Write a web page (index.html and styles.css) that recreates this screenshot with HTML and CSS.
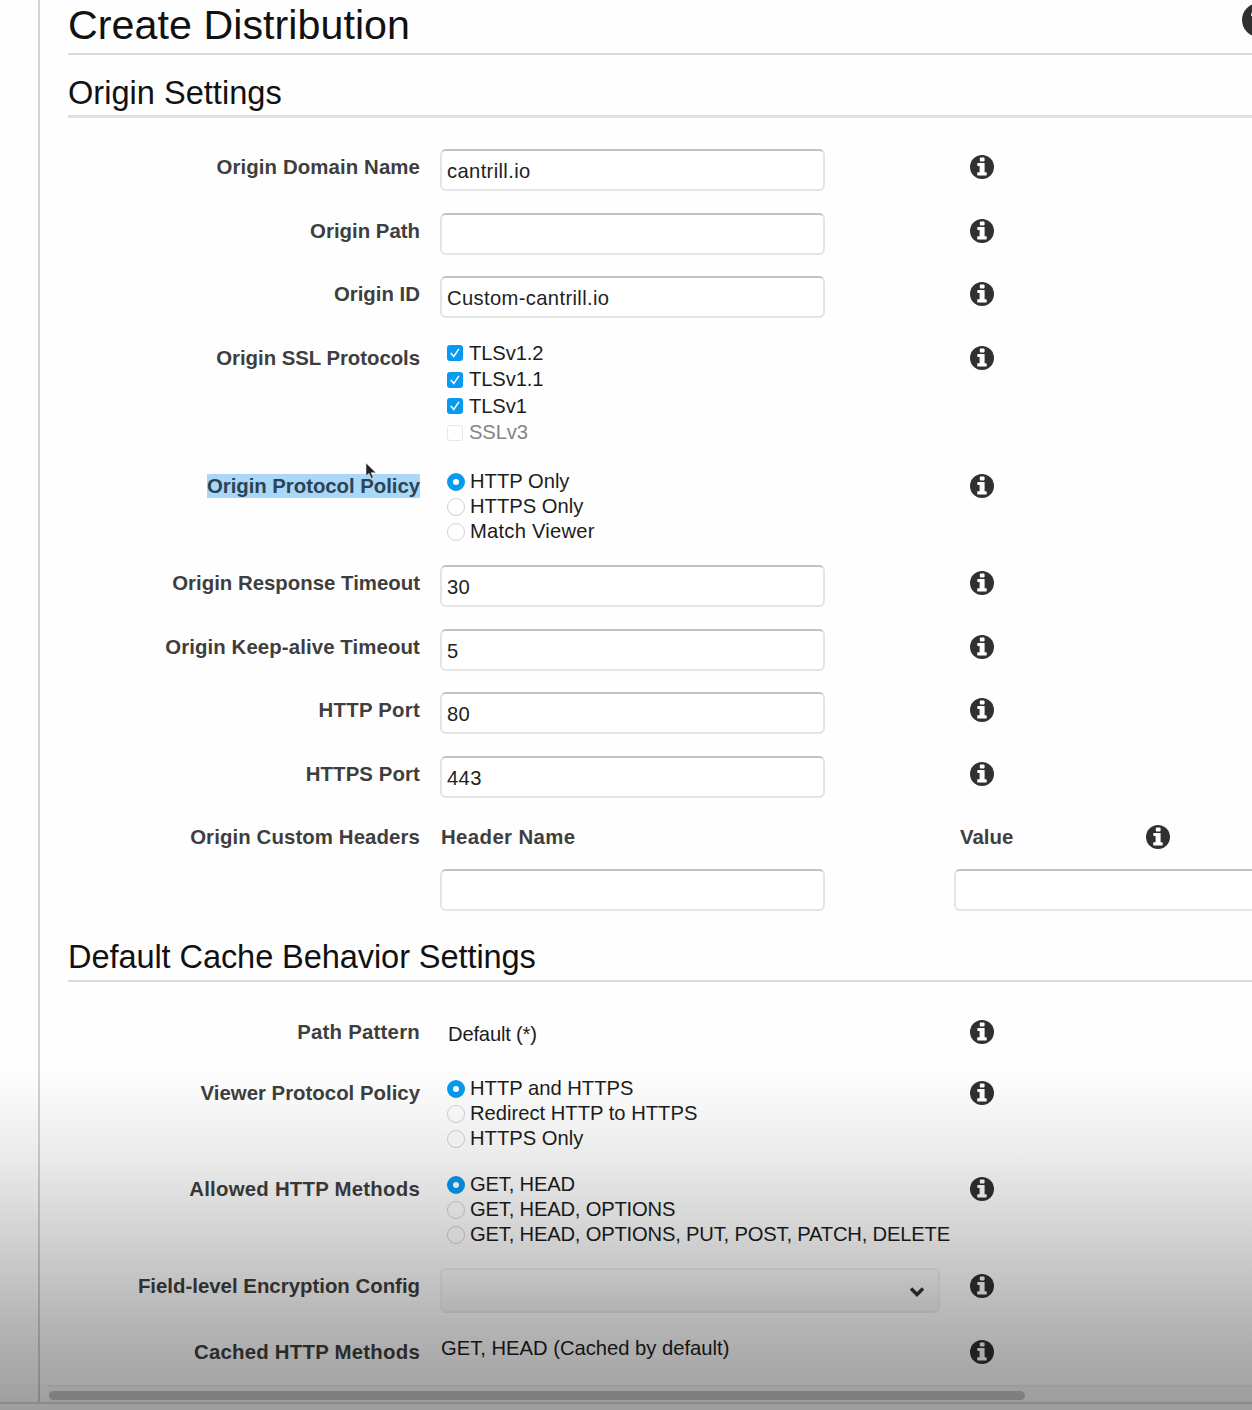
FILE: index.html
```html
<!DOCTYPE html>
<html lang="en">
<head>
<meta charset="utf-8">
<title>Create Distribution</title>
<link rel="stylesheet" href="styles.css">
</head>
<body>
<svg class="sprite" aria-hidden="true">
  <symbol id="info" viewBox="0 0 24 24">
    <circle cx="12" cy="12" r="12" fill="#303030"/>
    <path fill="#fff" d="M10.4 2.4h3.6l.6.8v2.6l-.6.7h-3.6l-.6-.7V3.200zM7.800 8.100h6.8v9.200h1.700l.4.5v2.200l-.4.5H7.600l-.4-.5v-2.200l.4-.5h2v-6.300H7.800l-.5-.5V8.600z"/>
  </symbol>
  <symbol id="check" viewBox="0 0 16 16">
    <path d="M4.2 8.4l2.6 3 4.8-7" fill="none" stroke="#fff" stroke-width="1.5" stroke-linecap="round"/>
  </symbol>
</svg>
<div class="window">
  <div class="panes">
    <aside class="side"></aside>
    <main class="content">
      <header class="title-bar">
        <h1>Create Distribution</h1>
        <svg class="help" viewBox="0 0 34 34"><circle cx="17" cy="17" r="17" fill="#303030"/><path d="M11 13c0-8 12-8 12-1 0 5-6 4-6 9m0 3v4" fill="none" stroke="#fff" stroke-width="4"/></svg>
      </header>
      <h2 class="origin-title">Origin Settings</h2>
      <section class="origin">
        <div class="row h64"><label class="wide">Origin Domain Name</label><div class="field"><input type="text" value="cantrill.io"></div><svg class="info"><use href="#info"/></svg></div>
        <div class="row h63"><label>Origin Path</label><div class="field"><input type="text"></div><svg class="info"><use href="#info"/></svg></div>
        <div class="row h64"><label>Origin ID</label><div class="field"><input type="text" value="Custom-cantrill.io"></div><svg class="info"><use href="#info"/></svg></div>
        <div class="row h128"><label class="tight">Origin SSL Protocols</label>
          <div class="field checks">
            <div class="opt"><span class="box on"><svg><use href="#check"/></svg></span><span>TLSv1.2</span></div>
            <div class="opt"><span class="box on"><svg><use href="#check"/></svg></span><span>TLSv1.1</span></div>
            <div class="opt"><span class="box on"><svg><use href="#check"/></svg></span><span>TLSv1</span></div>
            <div class="opt off"><span class="box"></span><span>SSLv3</span></div>
          </div><svg class="info"><use href="#info"/></svg></div>
        <div class="row h97"><label class="tight"><mark>Origin Protocol Policy</mark></label>
          <div class="field radios">
            <div class="opt"><span class="radio on"></span><span>HTTP Only</span></div>
            <div class="opt"><span class="radio"></span><span>HTTPS Only</span></div>
            <div class="opt"><span class="radio"></span><span class="wider">Match Viewer</span></div>
          </div><svg class="info"><use href="#info"/></svg></div>
        <div class="row h64"><label>Origin Response Timeout</label><div class="field"><input type="text" value="30"></div><svg class="info"><use href="#info"/></svg></div>
        <div class="row h63"><label class="wide">Origin Keep-alive Timeout</label><div class="field"><input type="text" value="5"></div><svg class="info"><use href="#info"/></svg></div>
        <div class="row h64"><label class="wider">HTTP Port</label><div class="field"><input type="text" value="80"></div><svg class="info"><use href="#info"/></svg></div>
        <div class="row h63"><label class="wide">HTTPS Port</label><div class="field"><input type="text" value="443"></div><svg class="info"><use href="#info"/></svg></div>
        <div class="row headers"><label class="wide">Origin Custom Headers</label>
          <div class="header-name"><b class="widest">Header Name</b><input type="text"></div>
          <div class="header-value"><div class="value-top"><b>Value</b><svg class="info"><use href="#info"/></svg></div><input type="text"></div>
        </div>
      </section>
      <h2 class="cache-title">Default Cache Behavior Settings</h2>
      <section class="cache">
        <div class="row h61"><label class="wider">Path Pattern</label><div class="field pattern tighter">Default (*)</div><svg class="info"><use href="#info"/></svg></div>
        <div class="row h96"><label>Viewer Protocol Policy</label>
          <div class="field radios">
            <div class="opt"><span class="radio on"></span><span>HTTP and HTTPS</span></div>
            <div class="opt"><span class="radio"></span><span>Redirect HTTP to HTTPS</span></div>
            <div class="opt"><span class="radio"></span><span>HTTPS Only</span></div>
          </div><svg class="info"><use href="#info"/></svg></div>
        <div class="row h97"><label class="wider">Allowed HTTP Methods</label>
          <div class="field radios tighter">
            <div class="opt"><span class="radio on"></span><span>GET, HEAD</span></div>
            <div class="opt"><span class="radio"></span><span>GET, HEAD, OPTIONS</span></div>
            <div class="opt"><span class="radio"></span><span>GET, HEAD, OPTIONS, PUT, POST, PATCH, DELETE</span></div>
          </div><svg class="info"><use href="#info"/></svg></div>
        <div class="row h66"><label>Field-level Encryption Config</label>
          <div class="field"><div class="select"><svg viewBox="0 0 16 12"><path d="M2 2.500l6 6 6-6" fill="none" stroke="#333" stroke-width="3.4"/></svg></div></div><svg class="info"><use href="#info"/></svg></div>
        <div class="row last"><label class="wider">Cached HTTP Methods</label><div class="field cached">GET, HEAD (Cached by default)</div><svg class="info"><use href="#info"/></svg></div>
      </section>
      <div class="scrollbar"><div class="thumb"></div></div>
    </main>
  </div>
  <div class="shade"></div>
  <svg class="cursor" viewBox="0 0 12 18"><path d="M1 1v13l3-2.600 2.300 5 2-1-2.200-4.600H11z" fill="#222" stroke="#ddd" stroke-width=".7"/></svg>
</div>
</body>
</html>
```

FILE: styles.css
```css
* { box-sizing: border-box; }
body {
  margin: 0;
  font-family: "Liberation Sans", Arial, sans-serif;
  font-size: 20.2px;
  color: #1c1c1c;
  background: #fefefe;
}
.sprite { display: block; width: 0; height: 0; }
.window { position: relative; width: 1252px; height: 1410px; overflow: hidden; }
.panes { display: flex; height: 1404px; border-bottom: 2px solid #dcdcdc; }
.side { flex: 0 0 40px; border-right: 2px solid #d3d3d3; }
.content { flex: 0 0 1212px; display: flex; flex-direction: column; overflow: hidden; }

.title-bar {
  display: flex;
  justify-content: space-between;
  height: 55px;
  margin: 0 -24px 0 28px;
  border-bottom: 2px solid #dadada;
}
h1, h2 { margin: 0; font-weight: 400; color: #111; white-space: nowrap; }
h1 { font-size: 41.2px; line-height: 50px; letter-spacing: .05px; }
.help { flex: none; width: 34px; height: 34px; margin: 3px 0 0; }
h2 { margin-left: 28px; font-size: 32.6px; border-bottom: 2px solid #dadada; }
.origin-title { height: 63px; line-height: 75px; border-bottom: 3px solid #e0e0e0; }
.origin { padding-top: 29px; }
.cache-title { height: 54px; line-height: 58px; letter-spacing: -.1px; }
.cache { padding-top: 30px; }

.tight { letter-spacing: -.05px; }
.tighter { letter-spacing: -.19px; }
.wide { letter-spacing: .1px; }
.wider { letter-spacing: .23px; }
.widest { letter-spacing: .38px; }

.row { display: grid; grid-template-columns: 380px 510px 24px; column-gap: 20px; align-items: start; }
.h61 { height: 61px; }
.h63 { height: 63px; }
.h64 { height: 64px; }
.h66 { height: 66px; }
.h96 { height: 96px; }
.h97 { height: 97px; }
.h128 { height: 128px; }
.headers { height: 111px; grid-template-columns: 380px 384px 320px; }
.header-value { margin-left: 105px; }
.last { height: 53px; }
label, b { font-weight: 700; font-size: 20.4px; line-height: 24px; color: #3e3e3e; white-space: nowrap; }
label { padding-top: 8px; text-align: right; }
mark { background: #a9d7f7; color: #2c4356; padding: 1px 0; }
.info { display: block; width: 24px; height: 24px; margin-top: 8px; }

input {
  display: block;
  width: 385px;
  height: 42px;
  margin: 2px 0 0;
  padding: 2px 6px 0 5px;
  border: 2px solid #e4e4e4;
  border-top-color: #c2c2c2;
  border-radius: 6px;
  background: #fff;
  font: inherit;
  letter-spacing: .36px;
  color: #222;
}
.header-name, .header-value { padding-top: 8px; }
.header-name b { display: block; padding-left: 1px; }
.header-name input { margin-top: 20px; }
.header-value input { width: 340px; margin: 20px 0 0 5px; }
.value-top { display: flex; justify-content: space-between; width: 221px; height: 24px; padding-left: 11px; }
.value-top .info { margin-top: 0; }

.opt { display: flex; align-items: center; white-space: nowrap; }
.checks { padding: 2px 0 0 7px; letter-spacing: -.1px; }
.checks .opt { height: 26.5px; gap: 6px; }
.box { flex: none; width: 16px; height: 16px; border: 1px solid #e6e6e6; border-radius: 3px; background: #fff; }
.box.on { border: 0; background: #069af0; }
.box svg { display: block; width: 16px; height: 16px; }
.off { color: #858585; }
.radios { padding: 3px 0 0 7px; }
.radios .opt { height: 25px; gap: 5px; }
.radio { flex: none; width: 18px; height: 18px; border: 1px solid #d2d2d2; border-radius: 50%; }
.radio.on { border: 6px solid #069af0; background: #fff; }
.pattern { padding: 10px 0 0 8px; line-height: 24px; }
.cached { padding: 4px 0 0 1px; line-height: 24px; }
.select {
  display: flex;
  align-items: center;
  justify-content: flex-end;
  width: 500px;
  height: 45px;
  margin-top: 2px;
  padding: 3px 13px 0 0;
  border: 2px solid #f0f0f0;
  border-bottom-color: #e9e9e9;
  border-radius: 6px;
  background: linear-gradient(#fcfcfc, #f4f4f4);
}
.select svg { width: 16px; height: 12px; }

.scrollbar { height: 17px; margin-left: 8px; border-top: 2px solid #f1f1f1; background: #fafafa; padding-top: 4px; }
.thumb { width: 976px; height: 9px; margin-left: 1px; border-radius: 5px; background: #c8c8c8; }

/* bottom fade laid over the whole window */
.shade {
  position: absolute;
  inset: 1070px 0 0;
  background: linear-gradient(rgba(0,0,0,0) 0%, rgba(0,0,0,.075) 25%, rgba(0,0,0,.18) 50%, rgba(0,0,0,.29) 75%, rgba(0,0,0,.38) 100%);
}
.cursor { position: absolute; left: 365px; top: 462px; width: 12px; height: 18px; }
```
